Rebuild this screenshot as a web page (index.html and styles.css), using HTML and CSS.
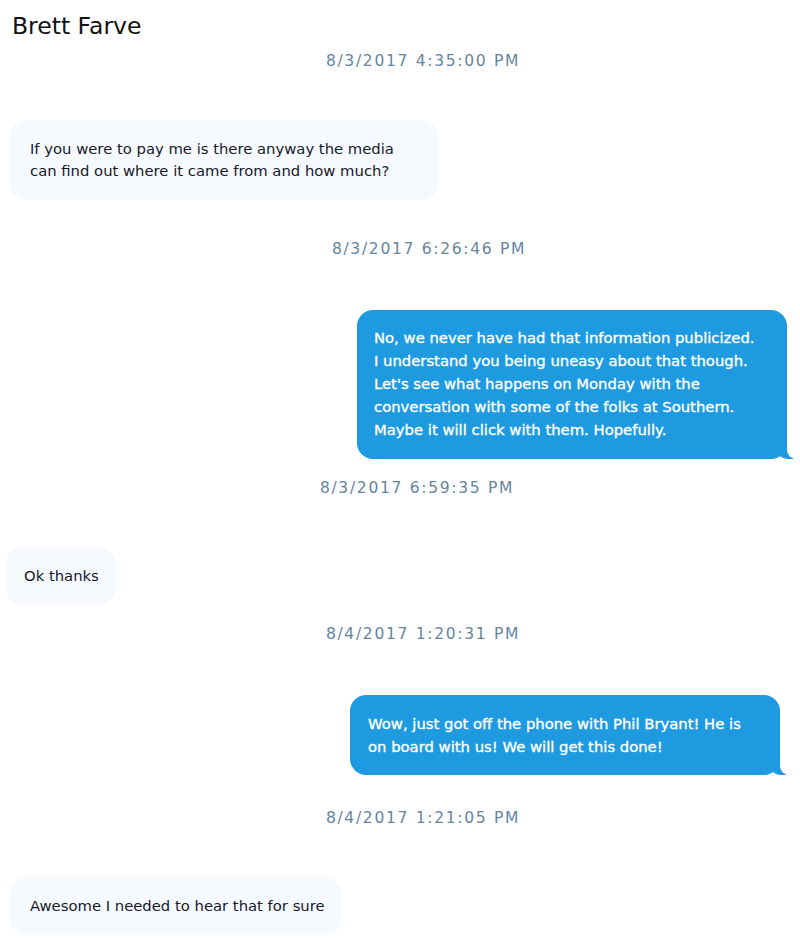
FILE: index.html
```html
<!DOCTYPE html>
<html lang="en">
<head>
<meta charset="utf-8">
<title>Brett Farve</title>
<link rel="stylesheet" href="styles.css">
</head>
<body>
<main class="thread">
  <h1 class="contact">Brett Farve</h1>

  <div class="stamp">8/3/2017 4:35:00 PM</div>
  <div class="msg received">If you were to pay me is there anyway the media can find out where it came from and how much?</div>

  <div class="stamp gap-lg shift-right">8/3/2017 6:26:46 PM</div>
  <div class="msg sent">No, we never have had that information publicized.<br>I understand you being uneasy about that though. Let's see what happens on Monday with the conversation with some of the folks at Southern. Maybe it will click with them. Hopefully.</div>

  <div class="stamp gap-sm shift-left">8/3/2017 6:59:35 PM</div>
  <div class="msg received tight">Ok thanks</div>

  <div class="stamp gap-sm to-sent">8/4/2017 1:20:31 PM</div>
  <div class="msg sent second">Wow, just got off the phone with Phil Bryant! He is on board with us! We will get this done!</div>

  <div class="stamp gap-md">8/4/2017 1:21:05 PM</div>
  <div class="msg received">Awesome I needed to hear that for sure</div>
</main>
</body>
</html>
```

FILE: styles.css
```css
* { box-sizing: border-box; }

html, body {
  margin: 0;
  padding: 0;
  background: #ffffff;
}

body {
  font-family: "DejaVu Sans", "Liberation Sans", sans-serif;
  color: #16182a;
}

.thread {
  width: 800px;
  padding: 13px 0 0 0;
  display: flex;
  flex-direction: column;
}

.contact {
  margin: 0 0 11px 12px;
  font-size: 23.5px;
  line-height: 27px;
  font-weight: normal;
  color: #111111;
}

.stamp {
  height: 20px;
  line-height: 20px;
  padding-left: 46px;
  text-align: center;
  font-size: 15.5px;
  letter-spacing: 1.7px;
  color: #6585a0;
  margin-bottom: 49px;
}

.stamp.gap-lg { margin-top: 39px; margin-bottom: 51px; }
.stamp.gap-md { margin-top: 33px; }
.stamp.gap-sm { margin-top: 19px; }
.stamp.to-sent { margin-bottom: 51px; }
.stamp.shift-left { padding-left: 34px; }
.stamp.shift-right { padding-left: 58px; }

.msg {
  position: relative;
  max-width: 430px;
  font-size: 14.8px;
  line-height: 22px;
  border-radius: 18px;
}

.received {
  align-self: flex-start;
  margin-left: 9px;
  padding: 18px 17px 18px 21px;
  background: #f6fafe;
  color: #16182a;
}

.received.tight {
  margin-left: 5px;
  padding-left: 19px;
}

.sent {
  align-self: flex-end;
  margin-right: 13px;
  padding: 16px 17px 18px 17px;
  line-height: 23px;
  background: #1e9ae0;
  color: #ffffff;
  border-radius: 16px;
  -webkit-text-stroke: 0.35px #ffffff;
}

.sent.second {
  margin-right: 20px;
  padding: 17px 17px 17px 18px;
}

.sent::before {
  content: "";
  position: absolute;
  right: -6px;
  bottom: 0;
  width: 18px;
  height: 16px;
  background: #1e9ae0;
  border-bottom-left-radius: 14px 12px;
}

.sent::after {
  content: "";
  position: absolute;
  right: -22px;
  bottom: 0;
  width: 22px;
  height: 16px;
  background: #ffffff;
  border-bottom-left-radius: 9px;
}
```
